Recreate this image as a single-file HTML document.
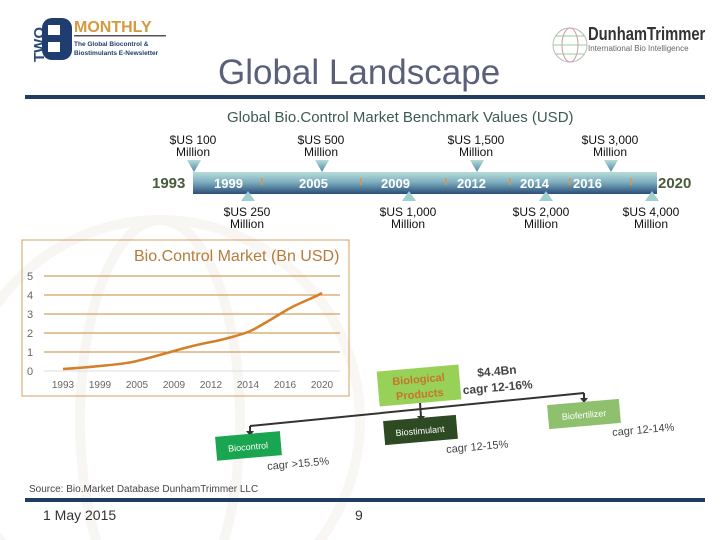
<!DOCTYPE html><html><head><meta charset="utf-8"><style>
html,body{margin:0;width:720px;height:540px;overflow:hidden}
body{background:#fff;position:relative;font-family:"Liberation Sans",sans-serif}
.a{position:absolute;white-space:nowrap}
.m{font-size:12px;color:#111;text-align:center;line-height:12px}
.yr{font-size:13px;color:#fff;font-weight:bold}
.xl{position:absolute;top:380px;font-size:10px;color:#666;width:40px;text-align:center}
</style></head><body>
<svg class="a" style="left:0;top:0" width="720" height="540">
<g fill="none" stroke="#f3efe8" stroke-width="10" opacity=".5">
<circle cx="160" cy="420" r="200"/><ellipse cx="160" cy="420" rx="80" ry="200"/></g>
<rect x="25" y="95" width="680" height="4" fill="#1f3d63"/>
<rect x="25" y="498" width="680" height="4" fill="#1f3d63"/>
<text x="0" y="0" transform="translate(44,62) rotate(-90)" font-size="15" font-weight="bold" fill="#2a4a7a">TWO</text>
<rect x="42" y="18" width="30" height="42" rx="10" fill="#1f3d6e"/>
<rect x="48" y="25" width="12" height="10" fill="#fff"/><rect x="48" y="42" width="12" height="10" fill="#fff"/>
<text x="74" y="32" font-size="16" font-weight="bold" fill="#d49a40">MONTHLY</text>
<rect x="74" y="35" width="92" height="1.5" fill="#555"/>
<text x="74" y="46" font-size="6.5" font-weight="bold" fill="#1f3d6e">The Global Biocontrol &amp;</text>
<text x="74" y="55" font-size="6.5" font-weight="bold" fill="#1f3d6e">Biostimulants E-Newsletter</text>
<circle cx="570" cy="45" r="17" fill="none" stroke="#bbb" stroke-width="1"/>
<ellipse cx="570" cy="45" rx="8" ry="17" fill="none" stroke="#c9a" stroke-width="1"/>
<path d="M553 45h34M556 36h28M556 54h28" stroke="#9c9" stroke-width="1"/>
<defs><linearGradient id="g" x1="0" y1="0" x2="0" y2="1"><stop offset="0" stop-color="#b7ddd9"/><stop offset=".45" stop-color="#7fb0c0"/><stop offset="1" stop-color="#2a4e7a"/></linearGradient>
<linearGradient id="t" x1="0" y1="0" x2="0" y2="1"><stop offset="0" stop-color="#b5dcd8"/><stop offset="1" stop-color="#4f86a8"/></linearGradient></defs>
<rect x="193" y="172" width="464" height="22" fill="url(#g)"/>
<g fill="#e8903a"><rect x="261" y="178" width="1.5" height="7"/><rect x="360" y="178" width="1.5" height="7"/><rect x="445" y="178" width="1.5" height="7"/><rect x="509" y="178" width="1.5" height="7"/><rect x="569" y="178" width="1.5" height="7"/><rect x="630" y="178" width="1.5" height="7"/></g>
<g fill="url(#t)"><path d="M187 160h14l-7 12z"/><path d="M315 160h14l-7 12z"/><path d="M470 160h14l-7 12z"/><path d="M604 160h14l-7 12z"/></g>
<g fill="#9fcfd0"><path d="M241 201h14l-7-10z"/><path d="M402 201h14l-7-10z"/><path d="M539 201h14l-7-10z"/><path d="M645 201h14l-7-10z"/></g>
<rect x="22" y="240" width="327" height="156" fill="none" stroke="#d3a060" stroke-width="1"/>
<g stroke="#c98a3a" stroke-width="1"><path d="M44 276h296M44 295h296M44 314h296M44 333h296M44 352h296"/><path d="M44 371h296" stroke="#ddd"/></g>
<path d="M63 369C80 368 90 367 100 366S125 364 137 361S160 355 174 351S200 344 211 342S240 335 248 332S270 320 285 311S310 300 322 293" fill="none" stroke="#d47f2a" stroke-width="2.5"/>
<!-- diagram -->
<path d="M250 426L584 393" stroke="#333" stroke-width="2" fill="none"/>
<path d="M250 426v6M584 393v6M420 403l1 14" stroke="#333" stroke-width="2"/>
<path d="M246 431h8l-4 5zM580 398h8l-4 5zM417 416h8l-4 5z" fill="#333"/>
<g transform="rotate(-5 419 385)"><rect x="378" y="368" width="82" height="35" fill="#98d157"/>
<text x="419" y="383" font-size="11" font-weight="bold" fill="#c8742a" text-anchor="middle">Biological</text>
<text x="419" y="398" font-size="11" font-weight="bold" fill="#c8742a" text-anchor="middle">Products</text></g>
<g transform="rotate(-5 500 380)"><text x="478" y="375" font-size="12" font-weight="bold" fill="#444">$4.4Bn</text>
<text x="462" y="391" font-size="12" font-weight="bold" fill="#444">cagr 12-16%</text></g>
<g transform="rotate(-5 248 446)"><rect x="216" y="434" width="65" height="24" fill="#1aa550"/>
<text x="248" y="450" font-size="9" fill="#fff" text-anchor="middle">Biocontrol</text></g>
<g transform="rotate(-5 420 430)"><rect x="384" y="418" width="73" height="24" fill="#2d4a22"/>
<text x="420" y="434" font-size="9" fill="#fff" text-anchor="middle">Biostimulant</text></g>
<g transform="rotate(-5 584 414)"><rect x="548" y="402" width="72" height="24" fill="#8fc06e"/>
<text x="584" y="418" font-size="9" fill="#fff" text-anchor="middle">Biofertilizer</text></g>
<g font-size="11" fill="#444"><text x="267" y="467" transform="rotate(-5 300 463)">cagr  &gt;15.5%</text>
<text x="446" y="450" transform="rotate(-5 480 446)">cagr 12-15%</text>
<text x="612" y="433" transform="rotate(-5 646 429)">cagr 12-14%</text></g>
</svg>
<div class="a" style="left:588px;top:24px;font-size:18px;font-weight:bold;color:#333;transform:scaleX(.82);transform-origin:0 0">DunhamTrimmer</div>
<div class="a" style="left:588px;top:44px;font-size:8px;color:#666">International Bio Intelligence</div>
<div class="a" style="left:218px;top:53px;font-size:35px;color:#5a607a">Global Landscape</div>
<div class="a" style="left:227px;top:109px;font-size:15px;color:#3c5a55">Global Bio.Control Market Benchmark Values (USD)</div>
<div class="a m" style="left:163px;top:134px;width:60px">$US 100<br>Million</div>
<div class="a m" style="left:291px;top:134px;width:60px">$US 500<br>Million</div>
<div class="a m" style="left:441px;top:134px;width:70px">$US 1,500<br>Million</div>
<div class="a m" style="left:575px;top:134px;width:70px">$US 3,000<br>Million</div>
<div class="a m" style="left:217px;top:206px;width:60px">$US 250<br>Million</div>
<div class="a m" style="left:373px;top:206px;width:70px">$US 1,000<br>Million</div>
<div class="a m" style="left:506px;top:206px;width:70px">$US 2,000<br>Million</div>
<div class="a m" style="left:616px;top:206px;width:70px">$US 4,000<br>Million</div>
<div class="a" style="left:152px;top:175px;font-size:15px;font-weight:bold;color:#4a5a3a">1993</div>
<div class="a" style="left:658px;top:175px;font-size:15px;font-weight:bold;color:#4a5a3a">2020</div>
<div class="a yr" style="left:214px;top:176px">1999</div>
<div class="a yr" style="left:299px;top:176px">2005</div>
<div class="a yr" style="left:381px;top:176px">2009</div>
<div class="a yr" style="left:457px;top:176px">2012</div>
<div class="a yr" style="left:520px;top:176px">2014</div>
<div class="a yr" style="left:573px;top:176px">2016</div>
<div class="a" style="left:134px;top:248px;font-size:16px;color:#b87a3a">Bio.Control Market (Bn USD)</div>
<div class="a" style="left:27px;top:268px;font-size:11px;color:#666;line-height:19px">5<br>4<br>3<br>2<br>1<br>0</div>
<div class="xl" style="left:43px">1993</div><div class="xl" style="left:80px">1999</div><div class="xl" style="left:117px">2005</div><div class="xl" style="left:154px">2009</div><div class="xl" style="left:191px">2012</div><div class="xl" style="left:228px">2014</div><div class="xl" style="left:265px">2016</div><div class="xl" style="left:302px">2020</div>
<div class="a" style="left:29px;top:484px;font-size:10px;color:#444">Source: Bio.Market Database DunhamTrimmer LLC</div>
<div class="a" style="left:43px;top:507px;font-size:14px;color:#333">1 May 2015</div>
<div class="a" style="left:355px;top:507px;font-size:14px;color:#333">9</div>
</body></html>
